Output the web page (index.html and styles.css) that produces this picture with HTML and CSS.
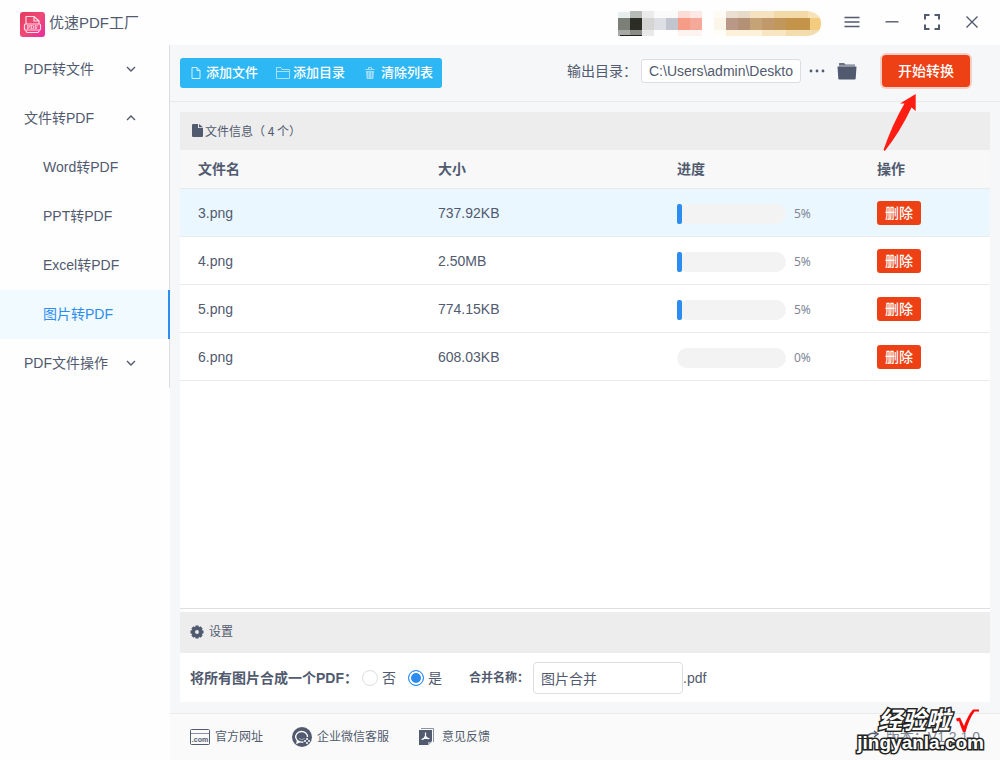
FILE: index.html
```html
<!DOCTYPE html>
<html lang="zh-CN">
<head>
<meta charset="utf-8">
<title>优速PDF工厂</title>
<link rel="stylesheet" href="styles.css">
</head>
<body>
<div class="app">
  <header class="titlebar">
    <svg class="logo" width="25" height="25" viewBox="0 0 25 25" aria-hidden="true">
      <defs><linearGradient id="logo-bg" x1="0" y1="0" x2="1" y2="1"><stop offset="0" stop-color="#e6395c"/><stop offset=".5" stop-color="#ee4a74"/><stop offset="1" stop-color="#ea2aa4"/></linearGradient></defs>
      <rect width="25" height="25" rx="3" fill="url(#logo-bg)"/>
      <g fill="none" stroke="#ffdbe4" stroke-width="1.2" stroke-linejoin="round">
        <path d="M6 12V4.500h8l5 4.500v3M14 4.500V9h5"/>
        <rect x="4.500" y="12" width="16" height="6" rx="1"/>
        <path d="M5.500 18.500l1.500 2h11l1.500-2"/>
      </g>
      <text x="12.500" y="17.200" class="logo-text" text-anchor="middle">PDF</text>
    </svg>
    <h1 class="app-name">优速PDF工厂</h1>
    <svg class="account" width="206" height="26" viewBox="0 0 206 26" shape-rendering="crispEdges" aria-hidden="true">
      <defs><clipPath id="pill"><path d="M96 0h96q13 2 13 12.500T192 25H96z"/></clipPath></defs>
      <path fill="#e8edee" d="M2 1h12v6H2z"/><path fill="#b8bcb8" d="M14 0h12v7H14z"/><path fill="#ebebeb" d="M26 0h12v7H26z"/><path fill="#fafafb" d="M38 0h24v7H38z"/><path fill="#fcdcd6" d="M62 0h12v7H62z"/><path fill="#fce8e5" d="M74 0h12v7H74z"/>
      <path fill="#7b7f78" d="M2 7h12v12H2z"/><path fill="#2c2e25" d="M14 7h12v12H14z"/><path fill="#d5d5d4" d="M26 7h12v12H26z"/><path fill="#dedfe5" d="M38 7h12v12H38z"/><path fill="#c2c5ce" d="M50 7h12v12H50z"/><path fill="#f59b86" d="M62 7h12v12H62z"/><path fill="#f5aa99" d="M74 7h12v12H74z"/>
      <path fill="#a9aaa7" d="M2 19h12v6H2z"/><path fill="#8b8c88" d="M14 19h12v6H14z"/><path fill="#e9e9e9" d="M26 19h12v6H26z"/><path fill="#fdf3f1" d="M62 19h24v6H62z"/><path fill="#222" d="M4 24h22v1H4z"/>
      <g clip-path="url(#pill)">
        <path fill="#fefbf4" d="M98 0h12v7H98z"/><path fill="#eadfd1" d="M110 0h12v7h-12z"/><path fill="#e8dac8" d="M122 0h12v7h-12z"/><path fill="#f4e2c0" d="M134 0h24v7h-24z"/><path fill="#f2d9a5" d="M158 0h34v7h-34z"/><path fill="#f7e3b7" d="M192 0h14v7h-14z"/>
        <path fill="#fcf6e9" d="M98 7h12v12H98z"/><path fill="#b99887" d="M110 7h12v12h-12z"/><path fill="#b49074" d="M122 7h12v12h-12z"/><path fill="#c6a376" d="M134 7h12v12h-12z"/><path fill="#c0986a" d="M146 7h12v12h-12z"/><path fill="#c2975b" d="M158 7h12v12h-12z"/><path fill="#c5944b" d="M170 7h24v12h-24z"/><path fill="#f3cc80" d="M194 7h12v12h-12z"/>
        <path fill="#fffdf8" d="M98 19h12v6H98z"/><path fill="#fdf1d9" d="M110 19h36v6h-36z"/><path fill="#f8e5c2" d="M146 19h24v6h-24z"/><path fill="#f3dcae" d="M170 19h36v6h-36z"/>
      </g>
    </svg>
    <div class="window-controls">
      <button class="icon-button" type="button" aria-label="菜单"><svg width="20" height="20" viewBox="0 0 20 20"><path d="M2.500 5.500h15M2.500 10h15M2.500 14.500h15" class="line"/></svg></button>
      <button class="icon-button" type="button" aria-label="最小化"><svg width="20" height="20" viewBox="0 0 20 20"><path d="M3.500 9.800h13" class="line"/></svg></button>
      <button class="icon-button" type="button" aria-label="最大化"><svg width="20" height="20" viewBox="0 0 20 20"><path d="M3 7.500V3h4.500M12.500 3H17v4.500M17 12.500V17h-4.500M7.500 17H3v-4.500" class="line thick"/></svg></button>
      <button class="icon-button" type="button" aria-label="关闭"><svg width="20" height="20" viewBox="0 0 20 20"><path d="M4.500 4.500l11 11M15.500 4.500l-11 11" class="line"/></svg></button>
    </div>
  </header>

  <div class="body">
    <aside class="sidebar">
      <nav class="menu">
        <a class="menu-item" href="#">PDF转文件<svg class="chevron" width="10" height="8" viewBox="0 0 10 8"><path d="M1 2l4 4 4-4" class="line"/></svg></a>
        <a class="menu-item" href="#">文件转PDF<svg class="chevron" width="10" height="8" viewBox="0 0 10 8"><path d="M1 6l4-4 4 4" class="line"/></svg></a>
        <a class="menu-item sub" href="#">Word转PDF</a>
        <a class="menu-item sub" href="#">PPT转PDF</a>
        <a class="menu-item sub" href="#">Excel转PDF</a>
        <a class="menu-item sub active" href="#" aria-current="page">图片转PDF</a>
        <a class="menu-item" href="#">PDF文件操作<svg class="chevron" width="10" height="8" viewBox="0 0 10 8"><path d="M1 2l4 4 4-4" class="line"/></svg></a>
      </nav>
    </aside>

    <main class="main">
      <div class="toolbar">
        <div class="button-group">
          <button class="tool-button" type="button"><svg width="10" height="12" viewBox="0 0 10 12"><path d="M1 .5h5l3 3v8H1zM6 .5v3h3" fill="none" stroke="#d8f1ff"/></svg>添加文件</button>
          <button class="tool-button folder" type="button"><svg width="14" height="12" viewBox="0 0 14 12"><path d="M.5 11.500V.5H5l1 2h7.500v9zM.5 4.500h13" fill="none" stroke="#a9e0fc"/></svg>添加目录</button>
          <button class="tool-button clear" type="button"><svg width="10" height="12" viewBox="0 0 10 12"><path d="M.5 2.500h9M3.500 2V.5h3V2" fill="none" stroke="#a9e0fc"/><path d="M1 4h8l-.7 8H1.700z" fill="#9fdcfb"/><path d="M3.500 5v6M6.500 5v6" stroke="#68caf8"/></svg>清除列表</button>
        </div>
        <div class="output">
          <label class="output-label" for="output-path">输出目录：</label>
          <input class="path-input" id="output-path" type="text" value="C:\Users\admin\Desktop">
          <button class="icon-button more" type="button" aria-label="选择目录"><svg width="16" height="4" viewBox="0 0 16 4" fill="#515a6e"><circle cx="2" cy="2" r="1.400"/><circle cx="8" cy="2" r="1.400"/><circle cx="14" cy="2" r="1.400"/></svg></button>
          <button class="icon-button open" type="button" aria-label="打开目录"><svg width="20" height="18" viewBox="0 0 20 18"><path d="M2 3V1.500Q2 1 2.500 1H7l1.500 1.500H18V5H2z" fill="#6a7285"/><path d="M.5 4.500h19l-.8 12q0 1-1 1H2.300q-1 0-1-1z" fill="#515a6e"/><path d="M2 4h16" stroke="#f5f6f9" stroke-width=".6"/></svg></button>
          <div class="start-wrap">
            <button class="start-button" type="button">开始转换</button>
            <svg class="pointer" width="36" height="58" viewBox="0 0 36 58" aria-hidden="true"><path d="M35.700 0V17L31.500 13.500Q20 38 4.800 57L3.500 56Q12 31 24.500 9.500L20 9.500z" fill="#fe1d13"/></svg>
          </div>
        </div>
      </div>

      <div class="content">
        <section class="card files">
          <h2 class="card-head file-head"><svg width="11" height="13" viewBox="0 0 11 13"><path d="M1 0h5v4h5v8q0 1-1 1H1q-1 0-1-1V1q0-1 1-1zM7 0l4 3.300H7z" fill="#515a6e"/></svg>文件信息（ 4 个）</h2>
          <table class="file-table">
            <colgroup><col class="col-name"><col class="col-size"><col class="col-progress"><col class="col-action"></colgroup>
            <thead><tr><th>文件名</th><th>大小</th><th>进度</th><th>操作</th></tr></thead>
            <tbody>
              <tr class="selected"><td>3.png</td><td>737.92KB</td><td><div class="progress"><div class="track"><div class="fill" style="width:5%"></div></div><span>5%</span></div></td><td><button class="delete" type="button">删除</button></td></tr>
              <tr><td>4.png</td><td>2.50MB</td><td><div class="progress"><div class="track"><div class="fill" style="width:5%"></div></div><span>5%</span></div></td><td><button class="delete" type="button">删除</button></td></tr>
              <tr><td>5.png</td><td>774.15KB</td><td><div class="progress"><div class="track"><div class="fill" style="width:5%"></div></div><span>5%</span></div></td><td><button class="delete" type="button">删除</button></td></tr>
              <tr><td>6.png</td><td>608.03KB</td><td><div class="progress"><div class="track"><div class="fill" style="width:0%"></div></div><span>0%</span></div></td><td><button class="delete" type="button">删除</button></td></tr>
            </tbody>
          </table>
        </section>

        <section class="card settings">
          <h2 class="card-head settings-head"><svg width="14" height="14" viewBox="0 0 14 14"><g fill="#515a6e"><path id="tooth" d="M5.500.5h3l.6 2.500H4.900zM5.500 13.500h3l.6-2.500H4.900z"/><use href="#tooth" transform="rotate(45 7 7)"/><use href="#tooth" transform="rotate(90 7 7)"/><use href="#tooth" transform="rotate(135 7 7)"/></g><circle cx="7" cy="7" r="3.600" fill="none" stroke="#515a6e" stroke-width="3.400"/></svg>设置</h2>
          <form class="settings-row">
            <span class="setting-label" id="merge-label">将所有图片合成一个PDF：</span>
            <div class="radios" role="radiogroup" aria-labelledby="merge-label">
              <label class="radio"><input type="radio" name="merge">否</label>
              <label class="radio"><input type="radio" name="merge" checked>是</label>
            </div>
            <label class="setting-label small" for="merge-name">合并名称：</label>
            <input class="name-input" id="merge-name" type="text" value="图片合并">
            <span class="suffix">.pdf</span>
          </form>
        </section>
      </div>

      <footer class="footer">
        <a class="footer-link site" href="#"><svg width="20" height="16" viewBox="0 0 20 16"><rect x=".5" y=".5" width="19" height="15" rx="1" fill="none" stroke="#515a6e"/><path d="M1 4.500h18" stroke="#8b92a2"/><text x="10" y="13" text-anchor="middle" class="com-text">.com</text></svg>官方网址</a>
        <a class="footer-link service" href="#"><svg width="20" height="20" viewBox="0 0 20 20"><circle cx="10" cy="10" r="10" fill="#515a6e"/><path d="M15.500 10a5.900 5.300 0 1 0-4 4.800M5.500 13.500L5 16l2.500-1.200" fill="none" stroke="#fff" stroke-width="1.300"/><path d="M7 11.500q2.500 2.500 5.500 0" fill="none" stroke="#aab0bc"/><g fill="#fff"><circle cx="15" cy="12" r="1"/><circle cx="13" cy="14" r="1"/><circle cx="17" cy="14" r="1"/><circle cx="15" cy="16" r="1"/></g></svg>企业微信客服</a>
        <a class="footer-link feedback" href="#"><svg width="15" height="18" viewBox="0 0 15 18"><path d="M2 .5h12.500V14" fill="none" stroke="#8b92a2"/><path d="M0 2h13v11l-4 4H0z" fill="#515a6e"/><path d="M9 17.500V14h4z" fill="#aab0bc"/><path d="M6.500 4.500v3.500M6.500 8q-1 3-4 3.500M6.500 8q1 3 4 2.500M4 10.500h5" fill="none" stroke="#fff" stroke-width="1.200"/></svg>意见反馈</a>
        <div class="version"><svg width="14" height="14" viewBox="0 0 14 14"><path d="M1 9a6 6 0 0 1 9-5M8 1l4 3-4 3" fill="none" stroke="#515a6e" stroke-width="1.500"/></svg><span>版本：V1.2.1.0</span></div>
      </footer>
    </main>
  </div>

  <div class="watermark">
    <div class="watermark-title">经验啦<svg width="24" height="24" viewBox="0 0 24 24" aria-hidden="true"><path d="M1 9.500L5 8.500 9 17Q13 6 18 .5H24V2.500H19.500Q14 10 10.500 23H8Q5 16 4 12L2 12.500z" fill="#fe0808"/></svg></div>
    <div class="watermark-url">jingyanla.com</div>
  </div>
</div>
</body>
</html>
```

FILE: styles.css
```css
* { box-sizing: border-box; }

body {
  margin: 0;
  font-family: "Liberation Sans", "Noto Sans CJK SC", sans-serif;
  font-size: 14px;
  line-height: 20px;
  color: #515a6e;
  background: #fefefe;
}

button, input { font: inherit; color: inherit; }
button { border: 0; padding: 0; background: none; cursor: pointer; }
a { color: inherit; text-decoration: none; }
svg { flex: none; display: block; }

.line { fill: none; stroke: #515a6e; stroke-width: 1.4; }
.line.thick { stroke-width: 2; }

.app {
  position: relative;
  display: flex;
  flex-direction: column;
  min-height: 100vh;
}

/* Title bar */
.titlebar {
  display: flex;
  align-items: center;
  height: 45px;
  padding: 0 18px 0 20px;
  background: #fefefe;
}
.logo { margin-top: 3px; }
.logo-text { font: bold 6px "Liberation Serif", serif; fill: #ffdbe4; }
.app-name {
  margin: 0 auto 0 4px;
  font-size: 15px;
  font-weight: 400;
  line-height: 24px;
}
.account { margin-right: 20px; margin-top: 2px; }
.window-controls { display: flex; gap: 20px; padding-bottom: 2px; }
.icon-button { display: flex; align-items: center; justify-content: center; }

/* Sidebar */
.body { display: flex; flex: 1; }
.sidebar { flex: none; width: 170px; background: #fefefe; }
.menu { border-right: 1px solid #dcdee2; }
.menu-item {
  display: flex;
  align-items: center;
  justify-content: space-between;
  height: 49px;
  padding: 0 33px 2px 24px;
}
.menu-item.sub { padding-left: 43px; }
.menu-item.active {
  margin-right: -1px;
  color: #2d8cf0;
  background: #f0faff;
  border-right: 2px solid #2d8cf0;
}

/* Toolbar */
.main {
  display: flex;
  flex: 1;
  flex-direction: column;
  min-width: 0;
  background: #f5f7f9;
}
.toolbar {
  display: flex;
  align-items: center;
  justify-content: space-between;
  height: 57px;
  padding: 0 30px 0 10px;
  border-bottom: 1px solid #e8eaec;
}
.button-group {
  display: flex;
  gap: 18px;
  height: 30px;
  padding: 0 9px 0 11px;
  border-radius: 3px;
  background: #2db7f5;
}
.tool-button {
  display: flex;
  align-items: center;
  gap: 5px;
  font-size: 13px;
  font-weight: 500;
  color: #fff;
}
.tool-button.folder { gap: 3px; }
.tool-button.clear { gap: 6px; padding-left: 2px; }
.output { display: flex; align-items: center; height: 52px; align-self: flex-start; }
.path-input {
  width: 160px;
  height: 24px;
  padding: 0 7px;
  border: 1px solid #dcdee2;
  border-radius: 3px;
  background: #fff;
}
.output-label { margin-right: 4px; }
.more { margin-left: 8px; }
.open { margin-left: 12px; }
.start-wrap { position: relative; margin-left: 25px; }
.start-button {
  width: 88px;
  height: 32px;
  border-radius: 4px;
  box-shadow: 0 0 0 2px #f5cfc6;
  background: #ed4014;
  font-weight: 500;
  color: #fff;
}
.pointer { position: absolute; top: 39px; left: -2px; }

/* Cards */
.content {
  display: flex;
  flex: 1;
  flex-direction: column;
  padding: 10px 10px 11px;
}
.card { background: #fff; }
.card-head {
  display: flex;
  align-items: center;
  margin: 0;
  font-size: 12px;
  font-weight: 400;
  background: #ededed;
}
.files { flex: 1; border-bottom: 1px solid #dcdee2; }
.file-head { gap: 2px; height: 38px; padding: 0 12px 1px; font-family: "Noto Sans CJK SC", sans-serif; }

.file-table { width: 100%; border-collapse: separate; border-spacing: 0; table-layout: fixed; }
.col-name { width: 240px; }
.col-size { width: 239px; }
.col-progress { width: 200px; }
.file-table th, .file-table td {
  padding: 0 0 0 18px;
  text-align: left;
  border-bottom: 1px solid #e8eaec;
}
.file-table th { height: 39px; font-weight: 700; background: #f8f8f9; }
.file-table td { height: 48px; }
.selected { background: #ebf7ff; }

.progress { display: flex; align-items: center; gap: 8px; padding-top: 2px; }
.progress span { font: 12px/20px "Noto Sans", sans-serif; color: #808695; }
.track { width: 109px; height: 20px; border-radius: 10px; background: #f3f3f3; }
.fill { height: 20px; border-radius: 2px; background: #2d8cf0; }
.delete {
  display: block;
  width: 44px;
  height: 24px;
  border-radius: 3px;
  background: #ed4014;
  font-weight: 500;
  color: #fff;
}

/* Settings */
.settings { border-top: 3px solid #fff; }
.settings-head { gap: 5px; height: 41px; padding: 0 10px 1px; }
.settings-row {
  display: flex;
  align-items: center;
  height: 49px;
  padding: 0 10px;
}
.setting-label { font-weight: 700; }
.setting-label.small { margin-left: 27px; font-size: 12px; }
.radios { display: flex; gap: 12px; margin-left: 4px; }
.radio { display: flex; align-items: center; gap: 4px; }
.radio input {
  appearance: none;
  width: 16px;
  height: 16px;
  margin: 0;
  border: 1px solid #dcdee2;
  border-radius: 50%;
  background: #fff;
}
.radio input:checked { border-color: #2d8cf0; background: #2d8cf0; box-shadow: inset 0 0 0 2px #fff; }
.name-input {
  width: 150px;
  height: 32px;
  margin-left: 4px;
  padding: 0 7px;
  border: 1px solid #dcdee2;
  border-radius: 4px;
  background: #fff;
}

/* Footer */
.footer {
  display: flex;
  align-items: center;
  height: 47px;
  padding: 0 20px;
  border-top: 1px solid #e8eaec;
  background: #fafafa;
  font-size: 12px;
}
.footer-link { display: flex; align-items: center; gap: 5px; }
.com-text { font: bold 7px "Liberation Sans", sans-serif; fill: #515a6e; }
.service { margin-left: 29px; }
.feedback { margin-left: 30px; gap: 8px; }
.version { display: flex; align-items: center; gap: 6px; margin-left: auto; font-size: 14px; color: #808695; }

/* Watermark laid over the page corner */
.watermark {
  position: absolute;
  right: 16px;
  bottom: 7px;
  color: #fff;
  font-weight: 700;
  -webkit-text-stroke: 3px #222;
  paint-order: stroke fill;
}
.watermark-title {
  display: flex;
  align-items: center;
  justify-content: flex-end;
  gap: 5px;
  padding-right: 5px;
  font-size: 24px;
  font-style: italic;
  line-height: 24px;
}
.watermark-url { font-size: 19px; line-height: 20px; }
```
